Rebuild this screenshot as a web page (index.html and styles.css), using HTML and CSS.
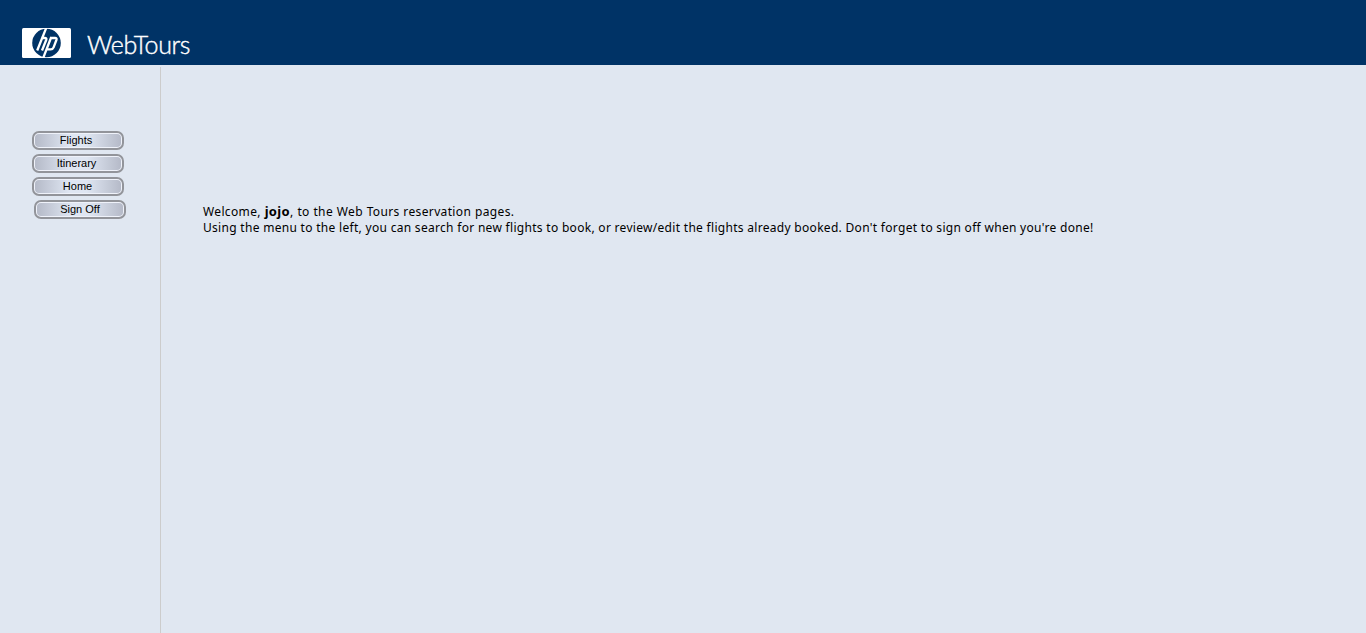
FILE: index.html
```html
<!DOCTYPE html>
<html lang="en">
<head>
<meta charset="utf-8">
<title>Web Tours</title>
<link rel="stylesheet" href="styles.css">
</head>
<body>
<header class="banner">
  <svg class="logo" width="49" height="30" viewBox="0 0 49 30" aria-label="hp">
    <rect width="49" height="30" rx="1.5" fill="#fff"/>
    <circle cx="24.5" cy="15" r="14.3" fill="#036"/>
    <g fill="none" stroke="#fff" stroke-width="2.3">
      <path d="M24.6 -1L15.2 22.5M19.2 10h3.6q2.1 0 1.4 2L20 22.5"/>
      <path d="M29.3 9L20.8 31M28.6 10h4.4q2.1 0 1.4 2l-2.8 7.4q-.8 2-2.9 2h-3.6"/>
    </g>
  </svg>
  <span class="brand">WebTours</span>
</header>
<div class="page">
  <nav class="menu">
    <a class="button"><span class="face">Flights</span></a>
    <a class="button"><span class="face">Itinerary</span></a>
    <a class="button"><span class="face">Home</span></a>
    <a class="button signoff"><span class="face">Sign Off</span></a>
  </nav>
  <main class="content">
    <p class="line first">Welcome, <b>jojo</b>, to the Web Tours reservation pages.</p>
    <p class="line second">Using the menu to the left, you can search for new flights to book, or review/edit the flights already booked. Don't forget to sign off when you're done!</p>
  </main>
</div>
</body>
</html>
```
FILE: styles.css
```css
* { box-sizing: border-box; }
body { margin: 0; height: 633px; display: flex; flex-direction: column; background: #e0e7f1; color: #000; overflow: hidden; }
.banner { height: 65px; flex: none; display: flex; background: #036; padding: 28px 0 0 22px; }
.logo { display: block; flex: none; }
.brand { margin-left: 16px; color: #fff; font: 300 25px/30px Lato, sans-serif; letter-spacing: -0.4px; padding-top: 1px; -webkit-text-stroke: 0.4px #fff; }
.page { flex: 1; display: flex; padding-top: 2px; }
.menu { width: 161px; flex: none; border-right: 1px solid #ccc; padding: 64px 0 0 32px; display: flex; flex-direction: column; gap: 4px; }
.button { width: 92px; height: 19px; border: 2px solid #92949a; border-radius: 7px; padding: 1px; background: #eff2fa; }
.signoff { margin-left: 2px; }
.face { display: block; height: 13px; border-radius: 4px; text-align: center; padding-right: 4px; font: 11px/13px "Liberation Sans", Arial, sans-serif; background: linear-gradient(90deg, #b5bac8, #dfe6f2 40%, #dfe6f2 60%, #b5bac8); }
.button:nth-child(3) .face { padding-right: 1px; }
.button:nth-child(2) .face { padding-right: 3px; }
.signoff .face { padding-right: 0; }
.content { padding: 137px 0 0 42px; }
.line { margin: 0; font: 12px/16px "Noto Sans", sans-serif; letter-spacing: 0.3px; white-space: nowrap; }
.first { letter-spacing: 0.36px; word-spacing: 0.25px; }
.first b { font-size: 13px; line-height: 1; }
```
